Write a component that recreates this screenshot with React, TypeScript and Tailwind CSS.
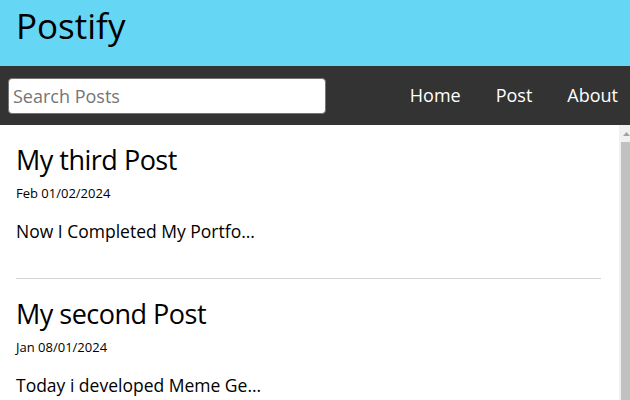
import React from "react";

const posts = [
  { title: "My third Post", date: "Feb 01/02/2024", body: "Now I Completed My Portfo..." },
  { title: "My second Post", date: "Jan 08/01/2024", body: "Today i developed Meme Ge..." },
  { title: "My first Post", date: "Jan 01/01/2024", body: "Hello world, this is my fir..." },
];

export default function App() {
  return (
    <div className="w-[630px] h-[400px] flex flex-col bg-white text-black overflow-hidden" style={{ fontFamily: '"Open Sans", sans-serif' }}>
      <header className="h-[66px] shrink-0 bg-[#66d6f5] pl-4 pt-[1px]">
        <h1 className="text-[35px] leading-[50px] m-0 font-normal">Postify</h1>
      </header>
      <nav className="h-[59px] shrink-0 bg-[#333333] flex items-center pl-2 pr-[12px]">
        <input
          type="text"
          placeholder="Search Posts"
          className="w-[318px] h-[36px] bg-white rounded-[4px] border border-[#767676] pl-[4px] text-[18px] placeholder:text-[#757575] outline-none"
        />
        <ul className="ml-auto flex gap-[35px] text-white text-[18px] list-none m-0 p-0">
          <li>Home</li>
          <li>Post</li>
          <li>About</li>
        </ul>
      </nav>
      <div className="h-[275px] flex overflow-hidden">
        <main className="flex-1 overflow-hidden pl-4 pr-[18px]">
          {posts.map((p) => (
            <article key={p.title} className="pt-[16px] pb-[34px] border-b border-[#d3d3d3]">
              <h2 className="text-[27px] tracking-[-0.5px] leading-[38px] font-normal m-0">{p.title}</h2>
              <p className="text-[13px] leading-[18px] mt-[5px]">{p.date}</p>
              <p className="text-[17.5px] leading-[25px] mt-[17px]">{p.body}</p>
            </article>
          ))}
        </main>
        <div className="w-[11px] shrink-0 bg-[#f1f1f1] flex flex-col">
          <div className="h-[17px] shrink-0 flex items-center pl-[4px] pt-[1px]">
            <svg width="7" height="4" viewBox="0 0 7 4">
              <polygon points="3.5,0 7,4 0,4" fill="#a3a3a3" />
            </svg>
          </div>
          <div className="flex-1 ml-[2px] bg-[#c1c1c1]" />
        </div>
      </div>
    </div>
  );
}
